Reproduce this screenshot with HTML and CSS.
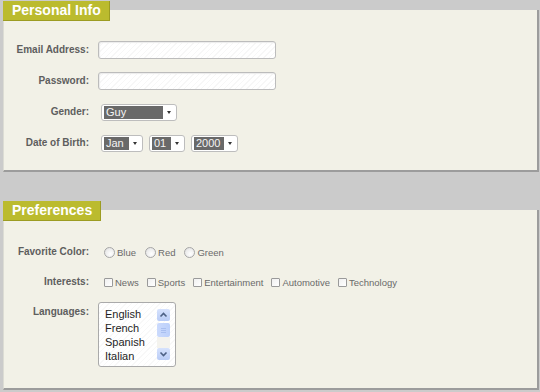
FILE: index.html
```html
<!DOCTYPE html>
<html lang="en">

<head>
    <meta charset="UTF-8">
    <title>Account Form</title>
    <link rel="stylesheet" href="styles.css">
</head>

<body>
    <form class="signup_form">
        <div class="form_group">
            <div class="group_tab">Personal Info</div>
            <div class="group_panel panel_personal">
                <div class="form_row">
                    <label class="row_label">Email Address:</label>
                    <div class="text_field"></div>
                </div>
                <div class="form_row">
                    <label class="row_label">Password:</label>
                    <div class="text_field"></div>
                </div>
                <div class="form_row">
                    <label class="row_label">Gender:</label>
                    <div class="row_controls">
                        <div class="dropdown"><span class="dropdown_value w_gender">Guy</span><span class="dropdown_arrow"></span></div>
                    </div>
                </div>
                <div class="form_row">
                    <label class="row_label">Date of Birth:</label>
                    <div class="row_controls dob_controls">
                        <div class="dropdown"><span class="dropdown_value w_month">Jan</span><span class="dropdown_arrow"></span></div>
                        <div class="dropdown"><span class="dropdown_value w_day">01</span><span class="dropdown_arrow"></span></div>
                        <div class="dropdown dropdown_year"><span class="dropdown_value w_year">2000</span><span class="dropdown_arrow"></span></div>
                    </div>
                </div>
            </div>
        </div>

        <div class="form_group">
            <div class="group_tab">Preferences</div>
            <div class="group_panel panel_prefs">
                <div class="form_row">
                    <label class="row_label">Favorite Color:</label>
                    <div class="row_controls choice_list">
                        <span class="choice"><span class="radio_box"></span>Blue</span>
                        <span class="choice"><span class="radio_box"></span>Red</span>
                        <span class="choice"><span class="radio_box"></span>Green</span>
                    </div>
                </div>
                <div class="form_row">
                    <label class="row_label">Interests:</label>
                    <div class="row_controls choice_list check_list">
                        <span class="choice"><span class="check_box"></span>News</span>
                        <span class="choice"><span class="check_box"></span>Sports</span>
                        <span class="choice"><span class="check_box"></span>Entertainment</span>
                        <span class="choice"><span class="check_box"></span>Automotive</span>
                        <span class="choice"><span class="check_box"></span>Technology</span>
                    </div>
                </div>
                <div class="form_row row_top">
                    <label class="row_label">Languages:</label>
                    <div class="list_box">
                        <div class="list_items">
                            <div>English</div>
                            <div>French</div>
                            <div>Spanish</div>
                            <div>Italian</div>
                        </div>
                        <div class="list_scroll">
                            <div class="scroll_btn">
                                <svg width="13" height="12" viewBox="0 0 13 12"><path d="M3.5 7.5 L6.5 4.5 L9.5 7.5" fill="none" stroke="#4d6185" stroke-width="1.6"/></svg>
                            </div>
                            <div class="scroll_thumb">
                                <svg width="13" height="14" viewBox="0 0 13 14"><path d="M4 5.5 H9 M4 7.5 H9 M4 9.5 H9" stroke="#a9bff0" stroke-width="1"/></svg>
                            </div>
                            <div class="scroll_track"></div>
                            <div class="scroll_btn">
                                <svg width="13" height="12" viewBox="0 0 13 12"><path d="M3.5 4.5 L6.5 7.5 L9.5 4.5" fill="none" stroke="#4d6185" stroke-width="1.6"/></svg>
                            </div>
                        </div>
                    </div>
                </div>
            </div>
        </div>
    </form>
</body>

</html>
```

FILE: styles.css
```css
body {
    margin: 0px;
    padding: 1px 1px 0px 3px;
    background-color: #cbcbcb;
    font-family: "Liberation Sans", Arial, sans-serif;
}

.form_group {
    margin-bottom: 29px;
}

.form_group:last-child {
    margin-bottom: 0px;
}

.group_tab {
    position: relative;
    z-index: 1;
    display: inline-block;
    height: 19px;
    line-height: 19px;
    padding: 0px 8px 0px 9px;
    background-color: #bbbb2e;
    border-right: 1px solid #9c9c22;
    border-bottom: 1px solid #9c9c22;
    color: #ffffff;
    font-size: 14px;
    font-weight: bold;
}

.group_panel {
    margin-top: -11px;
    background-color: #f2f1e7;
    border-left: 1px solid #dcdcd4;
    border-right: 2px solid #9c9c9c;
    border-bottom: 2px solid #9c9c9c;
    display: flex;
    flex-direction: column;
}

.panel_personal {
    padding: 30px 0px 17px 0px;
    gap: 11px;
}

.panel_prefs {
    padding: 32px 0px 21px 0px;
    gap: 10px;
}

.form_row {
    display: grid;
    grid-template-columns: 85px 1fr;
    column-gap: 9px;
    align-items: center;
    height: 20px;
}

.row_top {
    align-items: start;
    height: auto;
}

.row_label {
    text-align: right;
    font-size: 10px;
    font-weight: bold;
    color: #5e5e5e;
    line-height: 20px;
}

.text_field {
    width: 176px;
    height: 16px;
    border: 1px solid #bcbcbc;
    border-radius: 3px;
    background: repeating-linear-gradient(135deg, #ffffff 0px, #ffffff 3px, #f7f7f7 3px, #f7f7f7 4px);
    box-shadow: inset 1px 1px 1px #ebebeb;
}

.row_controls {
    display: flex;
    align-items: center;
}

.dob_controls {
    gap: 6px;
}

.dropdown {
    display: flex;
    align-items: center;
    margin-left: 3px;
    height: 15px;
    padding: 0px 0px 0px 2px;
    border: 1px solid #bdbdbd;
    border-radius: 3px;
    background-color: #ffffff;
}

.dob_controls .dropdown + .dropdown {
    margin-left: 0px;
}

.dob_controls .dropdown_year {
    margin-left: 2px;
}

.dropdown_value {
    height: 13px;
    line-height: 13px;
    padding-left: 2px;
    background-color: #696969;
    color: #f4f4f4;
    font-size: 11px;
    box-sizing: border-box;
}

.w_gender { width: 59px; }
.w_month { width: 25px; }
.w_day { width: 19px; }
.w_year { width: 30px; }

.dropdown_arrow {
    width: 13px;
    height: 13px;
    position: relative;
}

.dropdown_arrow::after {
    content: "";
    position: absolute;
    left: 4px;
    top: 5px;
    border-left: 2.5px solid transparent;
    border-right: 2.5px solid transparent;
    border-top: 3px solid #333333;
}

.choice_list {
    padding-left: 6px;
    gap: 9px;
}

.check_list {
    gap: 8px;
}

.choice {
    display: flex;
    align-items: center;
    gap: 2px;
    font-size: 9.5px;
    color: #6a6a6a;
}

.radio_box {
    width: 9px;
    height: 9px;
    border: 1px solid #a6a6a6;
    border-radius: 50%;
    background: radial-gradient(circle at 60% 65%, #ffffff 0%, #ececec 60%, #d9d9d9 100%);
}

.radio_box + * {
    margin-left: 0px;
}

.check_box {
    width: 7px;
    height: 7px;
    border: 1px solid #9a9a9a;
    border-radius: 1px;
    background: linear-gradient(135deg, #f0f0f0, #ffffff);
}

.list_box {
    display: flex;
    width: 76px;
    height: 63px;
    border: 1px solid #aaaaaa;
    border-radius: 3px;
    background: repeating-linear-gradient(135deg, #ffffff 0px, #ffffff 3px, #f8f8f8 3px, #f8f8f8 4px);
}

.list_items {
    flex: 1;
    padding: 4px 0px 0px 6px;
    font-size: 11px;
    line-height: 14px;
    color: #1e1e1e;
}

.list_scroll {
    display: flex;
    flex-direction: column;
    width: 13px;
    margin: 6px 5px 6px 0px;
}

.scroll_btn {
    height: 12px;
    border-radius: 2px;
    background: linear-gradient(#d6e2fd, #b9ccf6);
}

.scroll_btn svg,
.scroll_thumb svg {
    display: block;
}

.scroll_thumb {
    height: 14px;
    margin-top: 2px;
    border-radius: 2px;
    background: linear-gradient(90deg, #cbdafc, #bcd0fb);
}

.scroll_track {
    flex: 1;
    background-color: #f4f3ee;
}
```
